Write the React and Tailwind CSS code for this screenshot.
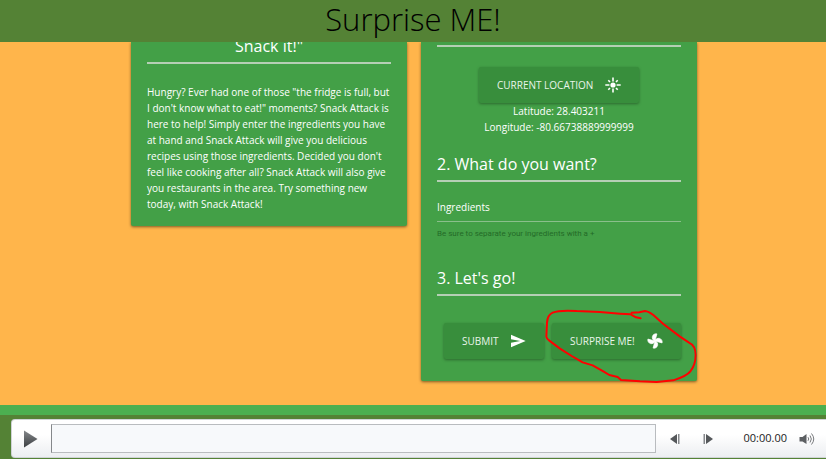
const buttonStyle =
  "flex h-9 items-center justify-between rounded-xs bg-[#388e3c] text-[#e9f5ea] uppercase shadow-[0_1px_3px_rgba(0,0,0,0.35)]";

function Rule() {
  return <hr className="h-0.5 border-0 bg-[#b5cfb5]" />;
}

function SectionTitle({ children }) {
  return (
    <div>
      <h2 className="mb-1 text-[16px] leading-6">{children}</h2>
      <Rule />
    </div>
  );
}

function FlareIcon() {
  return (
    <svg className="size-4" viewBox="0 0 16 16" stroke="#fff" strokeWidth="1.6" aria-hidden="true">
      <circle cx="8" cy="8" r="2.6" fill="#fff" stroke="none" />
      <path d="M8 0.5 V4.4 M8 11.6 V15.5 M0.3 8 H4.4 M11.6 8 H15.7 M3.3 3.3 L5 5 M11 11 L12.7 12.7 M12.7 3.3 L11 5 M5 11 L3.3 12.7" />
    </svg>
  );
}

function SendIcon() {
  return (
    <svg className="size-4" viewBox="0 0 24 24" fill="#fff" aria-hidden="true">
      <path d="M1.5 2.5 L23.5 12 L1.5 21.5 L1.5 14.5 L15.5 12 L1.5 9.5Z" />
    </svg>
  );
}

function FanIcon() {
  return (
    <svg
      className="size-4"
      viewBox="0 0 24 24"
      fill="#fff"
      stroke="#fff"
      strokeWidth="1"
      strokeLinejoin="round"
      aria-hidden="true"
    >
      <g transform="rotate(15 12 12)">
        <path d="M12 12c0-3 2.5-5.5 5.5-5.5S23 9 23 12H12zm0 0c0 3-2.5 5.5-5.5 5.5S1 15 1 12h11zm0 0c-3 0-5.5-2.5-5.5-5.5S9 1 12 1v11zm0 0c3 0 5.5 2.5 5.5 5.5S15 23 12 23V12z" />
      </g>
    </svg>
  );
}

function AboutCard() {
  return (
    <section className="flex-1 rounded-b-xs bg-[#43a047] px-4 pb-3.5 shadow-[0_1px_3px_rgba(0,0,0,0.5)]">
      <h2 className="-mt-2 mb-1 text-center text-[16px] leading-6">Snack it!"</h2>
      <Rule />
      <p className="mt-5 text-[10px] leading-4 whitespace-nowrap">
        Hungry? Ever had one of those "the fridge is full, but
        <br />
        I don't know what to eat!" moments? Snack Attack is
        <br />
        here to help! Simply enter the ingredients you have
        <br />
        at hand and Snack Attack will give you delicious
        <br />
        recipes using those ingredients. Decided you don't
        <br />
        feel like cooking after all? Snack Attack will also give
        <br />
        you restaurants in the area. Try something new
        <br />
        today, with Snack Attack!
      </p>
    </section>
  );
}

function RedCircle() {
  return (
    <svg
      className="pointer-events-none absolute -top-[23px] -left-3 h-[90px] w-40"
      viewBox="0 0 480 270"
      fill="none"
      stroke="#ff0000"
      strokeWidth="6"
      strokeLinecap="round"
      strokeLinejoin="round"
      aria-hidden="true"
    >
      <path d="M302 55 L288 52 L272 43 L240 41 L180 36 L110 33 C80 31 50 33 38 38 C25 44 22 53 21 68 L19 110 Q20 117 28 122 L60 146 L95 168 L128 187 L158 196 L190 214 L208 225 L233 231 L243 240 L300 244 L350 246 L400 241 C425 233 442 226 451 214 C464 198 467 183 467 165 C467 145 458 133 447 128 L420 110 L370 72 L340 45 Q325 34 315 33 L298 37 L275 38" />
    </svg>
  );
}

function FormCard() {
  return (
    <section className="flex-1 rounded-b-xs bg-[#43a047] px-4 pt-[3px] pb-[22px] text-[10px] leading-4 shadow-[0_1px_3px_rgba(0,0,0,0.5)]">
      <Rule />
      <div className="mt-5 flex flex-col items-center text-center">
        <button type="button" className={`${buttonStyle} w-40 px-[18px]`}>
          Current Location
          <FlareIcon />
        </button>
        <p>Latitude: 28.403211</p>
        <p>Longitude: -80.66738889999999</p>
      </div>
      <div className="mt-[17px]">
        <SectionTitle>2. What do you want?</SectionTitle>
      </div>
      <form onSubmit={(e) => e.preventDefault()}>
        <div className="relative mt-2.5">
          <label htmlFor="ingredients" className="absolute top-[7px] left-0">
            Ingredients
          </label>
          <input
            id="ingredients"
            type="text"
            aria-describedby="ingredients-help"
            className="block h-[30px] w-full border-b border-[#8abf8b] bg-transparent outline-none"
          />
        </div>
        <p
          id="ingredients-help"
          className="mt-1.5 font-[Roboto,sans-serif] text-[8px] leading-3 text-[#236b27]"
        >
          Be sure to separate your ingredients with a +
        </p>
        <div className="mt-[26px]">
          <SectionTitle>3. Let's go!</SectionTitle>
        </div>
        <div className="mt-[27px] flex justify-end gap-2">
          <button type="submit" className={`${buttonStyle} w-[100px] px-[18px]`}>
            Submit
            <SendIcon />
          </button>
          <div className="relative">
            <button type="button" className={`${buttonStyle} w-[129px] px-[18px]`}>
              Surprise me!
              <FanIcon />
            </button>
            <RedCircle />
          </div>
        </div>
      </form>
    </section>
  );
}

function Player() {
  return (
    <footer className="bg-[#548235] pt-1 pb-px pl-[11px]">
      <div className="flex h-[39px] items-center rounded-l border border-r-0 border-[#d0d3d6] bg-linear-to-b from-white from-40% to-[#eceef1] pr-[11px] pl-[11px]">
        <button type="button" aria-label="Play">
          <svg className="h-[18px] w-4" viewBox="0 0 16 18">
            <defs>
              <linearGradient id="play" x1="0" y1="0" x2="0" y2="1">
                <stop offset="0" stopColor="#85888b" />
                <stop offset="1" stopColor="#3c3f42" />
              </linearGradient>
            </defs>
            <path d="M1 0.5 L14.5 9 L1 17.5Z" fill="url(#play)" />
          </svg>
        </button>
        <div className="ml-3 h-[29px] flex-1 border border-[#b9bcbf] border-l-[#85888b] bg-[#f7f9fb]" />
        <button type="button" aria-label="Previous frame" className="ml-3.5">
          <svg className="h-3 w-2.5" viewBox="0 0 10 12">
            <path d="M7 1 V11 L0 6Z" fill="#55585b" />
            <path d="M8 1 H9.5 V11 H8Z" fill="#85888b" />
          </svg>
        </button>
        <button type="button" aria-label="Next frame" className="ml-[23px]">
          <svg className="h-3 w-2.5" viewBox="0 0 10 12">
            <path d="M3 1 V11 L10 6Z" fill="#55585b" />
            <path d="M0.5 1 H2 V11 H0.5Z" fill="#85888b" />
          </svg>
        </button>
        <span className="ml-[30px] text-[11px] text-[#222]">00:00.00</span>
        <button type="button" aria-label="Volume" className="ml-3">
          <svg className="h-3.5 w-4" viewBox="0 0 16 14" fill="none" stroke="#77797c">
            <path d="M0.5 5 H3.5 L7.5 2 V12 L3.5 9.5 H0.5Z" fill="#5c5f62" stroke="none" />
            <path d="M9 5.2 Q10.5 7 9 8.8 M11 3.5 Q13.7 7 11 10.5 M12.5 1.5 Q17 7 12.5 12.5" />
          </svg>
        </button>
      </div>
    </footer>
  );
}

export default function App() {
  return (
    <div className="flex h-screen flex-col overflow-hidden bg-[#ffb54b] font-['Open_Sans','Noto_Sans',sans-serif] text-white">
      <header className="z-10 bg-[#548235] pb-1">
        <h1 className="text-center text-[31px] leading-[38px] font-light text-black">
          Surprise ME!
        </h1>
      </header>
      <main className="min-h-0 flex-1 overflow-hidden pl-0.5">
        <div className="mx-auto flex max-w-[566px] items-start gap-3.5">
          <AboutCard />
          <FormCard />
        </div>
      </main>
      <div className="h-2.5 bg-[#4caf50]" />
      <Player />
    </div>
  );
}
